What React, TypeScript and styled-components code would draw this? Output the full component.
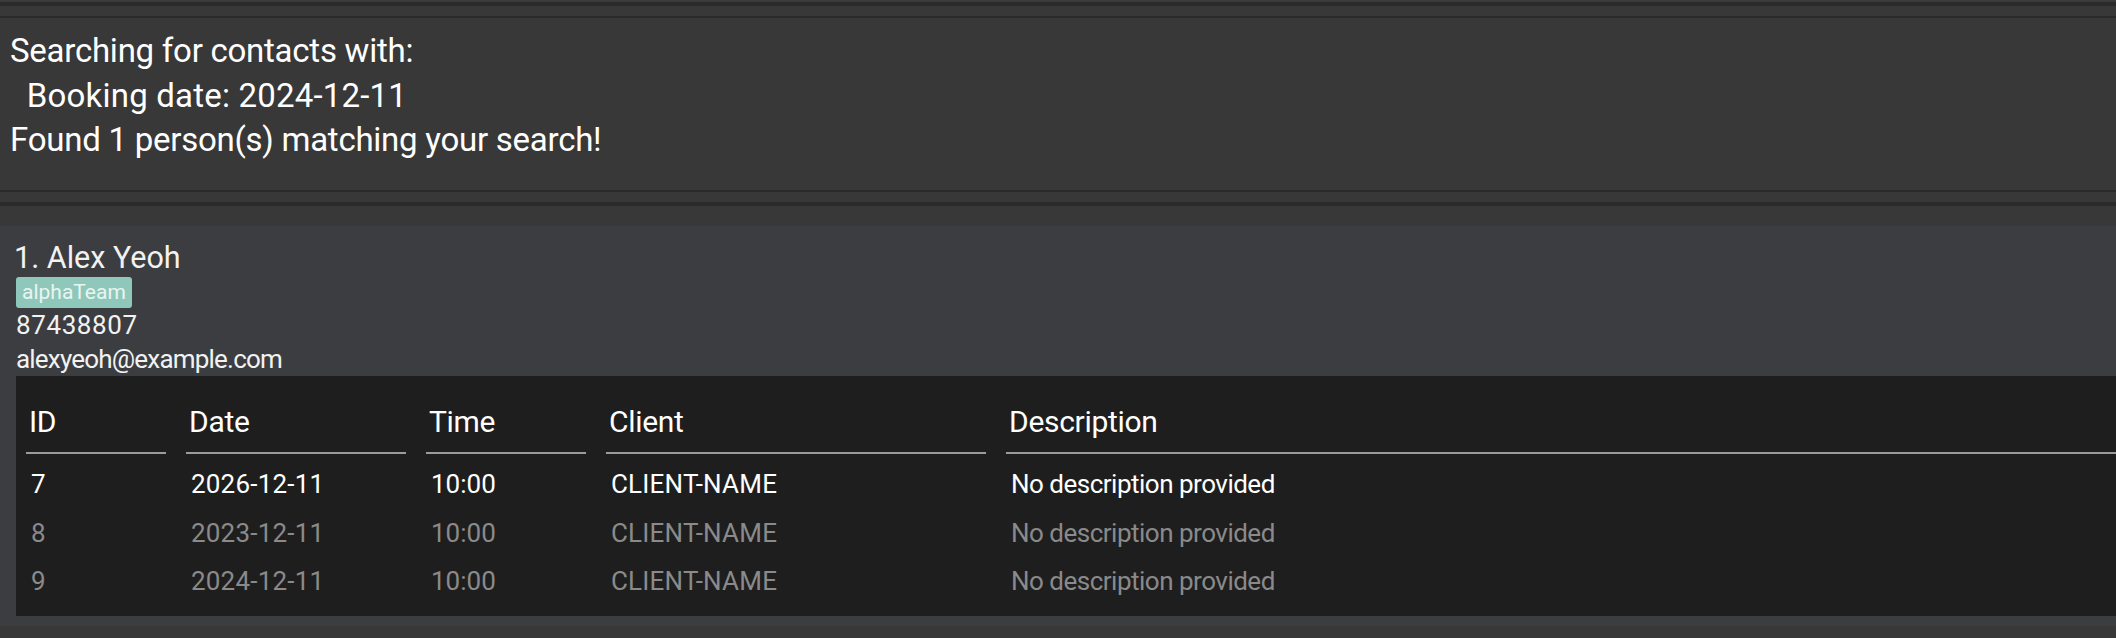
import React from "react";
import styled, { createGlobalStyle } from "styled-components";

const GlobalStyle = createGlobalStyle`
  html, body {
    margin: 0;
    padding: 0;
    background: #383838;
    overflow: hidden;
  }
  body {
    font-family: Roboto, "Liberation Sans", Arial, sans-serif;
  }
`;

const Page = styled.div`
  width: 2116px;
  height: 638px;
  background: #383838;
  display: flex;
  flex-direction: column;
  overflow: hidden;
`;

const CommandEdge = styled.div`
  height: 2px;
  background: #3b3b3b;
  border-bottom: 4px solid #2a2a2a;
`;

const ResultPane = styled.section`
  margin-top: 10px;
  box-sizing: border-box;
  height: 176px;
  border-top: 2px solid #2a2a2a;
  border-bottom: 2px solid #2a2a2a;
  padding: 11px 10px 0 10px;
`;

const ResultLine = styled.div<{ $spacing?: number }>`
  color: #ffffff;
  font-size: 33px;
  line-height: 44.5px;
  letter-spacing: ${(p) => p.$spacing ?? -0.25}px;
  white-space: pre;
`;

const ListPane = styled.section`
  margin-top: 10px;
  border-top: 4px solid #2a2a2a;
  padding-top: 20px;
  flex: 1;
`;

const Card = styled.article`
  background: #3c3d40;
  padding: 14px 0 10px 16px;
  display: flex;
  flex-direction: column;
  align-items: flex-start;
  color: #f2f2f2;
`;

const Name = styled.div`
  font-size: 30.5px;
  line-height: 36px;
  margin-left: -2px;
`;

const Tag = styled.span`
  margin-top: 1px;
  height: 31px;
  line-height: 31px;
  padding: 0 6px;
  border-radius: 3px;
  background: #8fc8ba;
  color: #eaf5f1;
  font-size: 21px;
`;

const Detail = styled.div<{ $spacing?: number }>`
  font-size: 26px;
  line-height: 34px;
  letter-spacing: ${(p) => p.$spacing ?? 0}px;
`;

const Table = styled.div`
  align-self: stretch;
  background: #1e1e1e;
  display: grid;
  grid-template-columns: 160px 240px 180px 400px 1fr;
  padding-bottom: 10.5px;
`;

const HeaderCell = styled.div<{ $last?: boolean }>`
  margin: 0 ${(p) => (p.$last ? "0" : "10px")} 6px 10px;
  padding: 28px 0 12px 3px;
  font-size: 30px;
  line-height: 36px;
  letter-spacing: -0.3px;
  color: #ffffff;
  border-bottom: 2px solid #9b9b9b;
`;

const DataCell = styled.div<{ $past?: boolean; $spacing?: number }>`
  margin: 0 10px;
  padding-left: 5px;
  font-size: 26px;
  line-height: 48.5px;
  letter-spacing: ${(p) => p.$spacing ?? 0}px;
  color: ${(p) => (p.$past ? "#8a8a8a" : "#ffffff")};
  white-space: nowrap;
`;

const bookings = [
  { id: "7", date: "2026-12-11", time: "10:00", client: "CLIENT-NAME", desc: "No description provided", past: false },
  { id: "8", date: "2023-12-11", time: "10:00", client: "CLIENT-NAME", desc: "No description provided", past: true },
  { id: "9", date: "2024-12-11", time: "10:00", client: "CLIENT-NAME", desc: "No description provided", past: true },
];

const headers = ["ID", "Date", "Time", "Client", "Description"];

export default function App() {
  return (
    <>
      <GlobalStyle />
      <Page>
        <CommandEdge />
        <ResultPane>
          <ResultLine>Searching for contacts with:</ResultLine>
          <ResultLine $spacing={0.2}>{"  Booking date: 2024-12-11"}</ResultLine>
          <ResultLine>Found 1 person(s) matching your search!</ResultLine>
        </ResultPane>
        <ListPane>
          <Card>
            <Name>1. Alex Yeoh</Name>
            <Tag>alphaTeam</Tag>
            <Detail $spacing={0.6}>87438807</Detail>
            <Detail $spacing={-0.8}>alexyeoh@example.com</Detail>
            <Table>
              {headers.map((h, i) => (
                <HeaderCell key={h} $last={i === headers.length - 1}>
                  {h}
                </HeaderCell>
              ))}
              {bookings.map((b) => (
                <React.Fragment key={b.id}>
                  <DataCell $past={b.past}>{b.id}</DataCell>
                  <DataCell $past={b.past} $spacing={0.2}>{b.date}</DataCell>
                  <DataCell $past={b.past}>{b.time}</DataCell>
                  <DataCell $past={b.past} $spacing={0.2}>{b.client}</DataCell>
                  <DataCell $past={b.past} $spacing={-0.5}>{b.desc}</DataCell>
                </React.Fragment>
              ))}
            </Table>
          </Card>
        </ListPane>
      </Page>
    </>
  );
}
